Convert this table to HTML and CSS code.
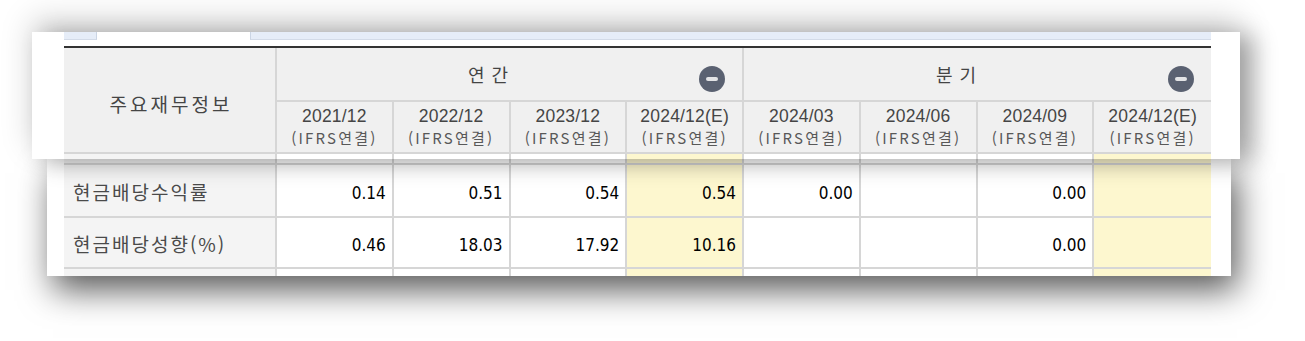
FILE: index.html
```html
<!DOCTYPE html>
<html lang="ko">
<head>
<meta charset="utf-8">
<title>주요재무정보</title>
<link rel="stylesheet" href="styles.css">
</head>
<body>
<div class="stage">
  <section class="panel panel-top">
    <div class="tabs">
      <span class="tab tab-first"></span>
      <span class="tab tab-on"></span>
      <span class="tab tab-rest"></span>
    </div>
    <table class="grid grid-head">
      <colgroup>
        <col class="col-label"><col><col><col><col><col><col><col><col>
      </colgroup>
      <thead>
        <tr class="row-group">
          <th rowspan="2" class="label-head">주요재무정보</th>
          <th colspan="4" class="group">
            <div class="group-in">
              <span class="group-title">연간</span>
              <svg class="toggle" width="26" height="26" viewBox="0 0 26 26"><circle cx="13" cy="13" r="13" fill="#5a6171"/><rect x="7" y="11" width="12" height="4" rx="2" fill="#e3e4e6"/></svg>
            </div>
          </th>
          <th colspan="4" class="group last">
            <div class="group-in">
              <span class="group-title">분기</span>
              <svg class="toggle" width="26" height="26" viewBox="0 0 26 26"><circle cx="13" cy="13" r="13" fill="#5a6171"/><rect x="7" y="11" width="12" height="4" rx="2" fill="#e3e4e6"/></svg>
            </div>
          </th>
        </tr>
        <tr class="row-period">
          <th><span class="date">2021/12</span><span class="basis">(IFRS연결)</span></th>
          <th><span class="date">2022/12</span><span class="basis">(IFRS연결)</span></th>
          <th><span class="date">2023/12</span><span class="basis">(IFRS연결)</span></th>
          <th><span class="date">2024/12(E)</span><span class="basis">(IFRS연결)</span></th>
          <th><span class="date">2024/03</span><span class="basis">(IFRS연결)</span></th>
          <th><span class="date">2024/06</span><span class="basis">(IFRS연결)</span></th>
          <th><span class="date">2024/09</span><span class="basis">(IFRS연결)</span></th>
          <th class="last"><span class="date">2024/12(E)</span><span class="basis">(IFRS연결)</span></th>
        </tr>
      </thead>
      <tbody>
        <tr class="row-stub row-stub-top">
          <td class="lbl"></td><td></td><td></td><td></td><td class="est"></td><td></td><td></td><td></td><td class="est last"></td>
        </tr>
      </tbody>
    </table>
  </section>

  <section class="panel panel-bottom">
    <table class="grid grid-body">
      <colgroup>
        <col class="col-label"><col><col><col><col><col><col><col><col>
      </colgroup>
      <tbody>
        <tr class="row-stub row-stub-a">
          <td class="lbl"></td><td></td><td></td><td></td><td class="est"></td><td></td><td></td><td></td><td class="est last"></td>
        </tr>
        <tr class="row-data row-a">
          <td class="lbl">현금배당수익률</td><td>0.14</td><td>0.51</td><td>0.54</td><td class="est">0.54</td><td>0.00</td><td></td><td>0.00</td><td class="est last"></td>
        </tr>
        <tr class="row-data row-b">
          <td class="lbl">현금배당성향(%)</td><td>0.46</td><td>18.03</td><td>17.92</td><td class="est">10.16</td><td></td><td></td><td>0.00</td><td class="est last"></td>
        </tr>
        <tr class="row-stub row-stub-b">
          <td class="lbl"></td><td></td><td></td><td></td><td class="est"></td><td></td><td></td><td></td><td class="est last"></td>
        </tr>
      </tbody>
    </table>
  </section>
</div>
</body>
</html>
```

FILE: styles.css
```css
html, body {
  margin: 0;
  padding: 0;
  background: #ffffff;
}

body {
  width: 1305px;
  height: 341px;
  overflow: hidden;
  font-family: "Noto Sans CJK KR", "Noto Sans", sans-serif;
}

.stage {
  padding-top: 32px;
}

.panel {
  background: #ffffff;
  box-sizing: border-box;
}

.panel-top {
  position: relative;
  z-index: 2;
  margin-left: 32px;
  width: 1208px;
  height: 127px;
  padding-left: 32px;
  box-shadow: 14px 4px 22px rgba(0, 0, 0, 0.30), 0 -12px 30px rgba(0, 0, 0, 0.18);
}

.panel-bottom {
  position: relative;
  z-index: 1;
  margin-left: 47px;
  width: 1184px;
  height: 117px;
  padding-left: 17px;
  overflow: hidden;
  box-shadow: 6px 14px 32px rgba(0, 0, 0, 0.65);
}

/* tab strip */
.tabs {
  display: flex;
  width: 1147px;
  height: 8px;
}

.tab-first {
  width: 32px;
  background: #e6edf8;
  border-right: 1px solid #cbd5e4;
  border-bottom: 1px solid #d3dbe8;
}

.tab-on {
  width: 153px;
  background: #ffffff;
}

.tab-rest {
  flex: 1;
  background: #e6edf8;
  border-left: 1px solid #cbd5e4;
  border-bottom: 1px solid #d3dbe8;
}

/* tables */
.grid {
  width: 1147px;
  table-layout: fixed;
  border-collapse: separate;
  border-spacing: 0;
}

.col-label {
  width: 213px;
}

.grid th,
.grid td {
  padding: 0;
  border-right: 2px solid #d6d6d6;
  border-bottom: 2px solid #d6d6d6;
  box-sizing: border-box;
}

.grid th.last,
.grid td.last {
  border-right: 0;
}

.grid-head {
  margin-top: 6px;
  border-top: 2px solid #333333;
}

.grid-head th {
  background: #f0f0f0;
  font-weight: 400;
  color: #444444;
}

.row-group {
  height: 54px;
}

.row-period {
  height: 52px;
}

.grid th.label-head {
  font-size: 19px;
  letter-spacing: 3px;
  padding-top: 6px;
  padding-left: 3px;
  color: #454545;
}

.grid th.group {
  padding-right: 17px;
}

.group-in {
  display: flex;
  align-items: center;
}

.group-title {
  flex: 1;
  text-align: center;
  font-size: 18px;
  letter-spacing: 7px;
  padding-left: 7px;
  color: #444444;
}

.toggle {
  flex: none;
  margin-top: 10px;
  display: block;
}

.grid .row-period th {
  padding-top: 4px;
  text-align: center;
  vertical-align: top;
}

.date,
.basis {
  display: block;
  white-space: nowrap;
}

.date {
  font-family: "Liberation Sans", "Noto Sans CJK KR", sans-serif;
  font-size: 17.5px;
  line-height: 21px;
  letter-spacing: 0.2px;
  color: #454545;
}

.basis {
  font-size: 15px;
  line-height: 21px;
  letter-spacing: 2.2px;
  color: #585858;
}

/* stub rows (cut-off rows at the edges of the pieces) */
.grid .row-stub td {
  background: #ffffff;
}

.row-stub-top {
  height: 5px;
}

.grid .row-stub-top td {
  border-bottom: 0;
}

.grid .row-stub-top td.lbl,
.grid .row-stub-b td.lbl {
  background: #f4f4f4;
}

.row-stub-a {
  height: 6px;
}

.row-stub-b {
  height: 7px;
}

.grid .row-stub-b td {
  border-bottom: 0;
}

.grid td.lbl {
  background: #f4f4f4;
}

.grid td.est,
.grid .row-stub td.est {
  background: #fdf7cf;
}

/* data rows */
.row-a {
  height: 53px;
}

.row-b {
  height: 51px;
}

.grid .row-data td {
  text-align: right;
  padding-right: 6px;
  padding-top: 4px;
  font-family: "DejaVu Sans Condensed", "Liberation Sans", sans-serif;
  font-size: 17px;
  color: #000000;
}

.grid .row-data td.lbl {
  text-align: left;
  padding-left: 9px;
  padding-right: 0;
  padding-top: 2px;
  font-family: "Noto Sans CJK KR", "Noto Sans", sans-serif;
  font-size: 19px;
  letter-spacing: 2px;
  color: #4a4a4a;
}
```
